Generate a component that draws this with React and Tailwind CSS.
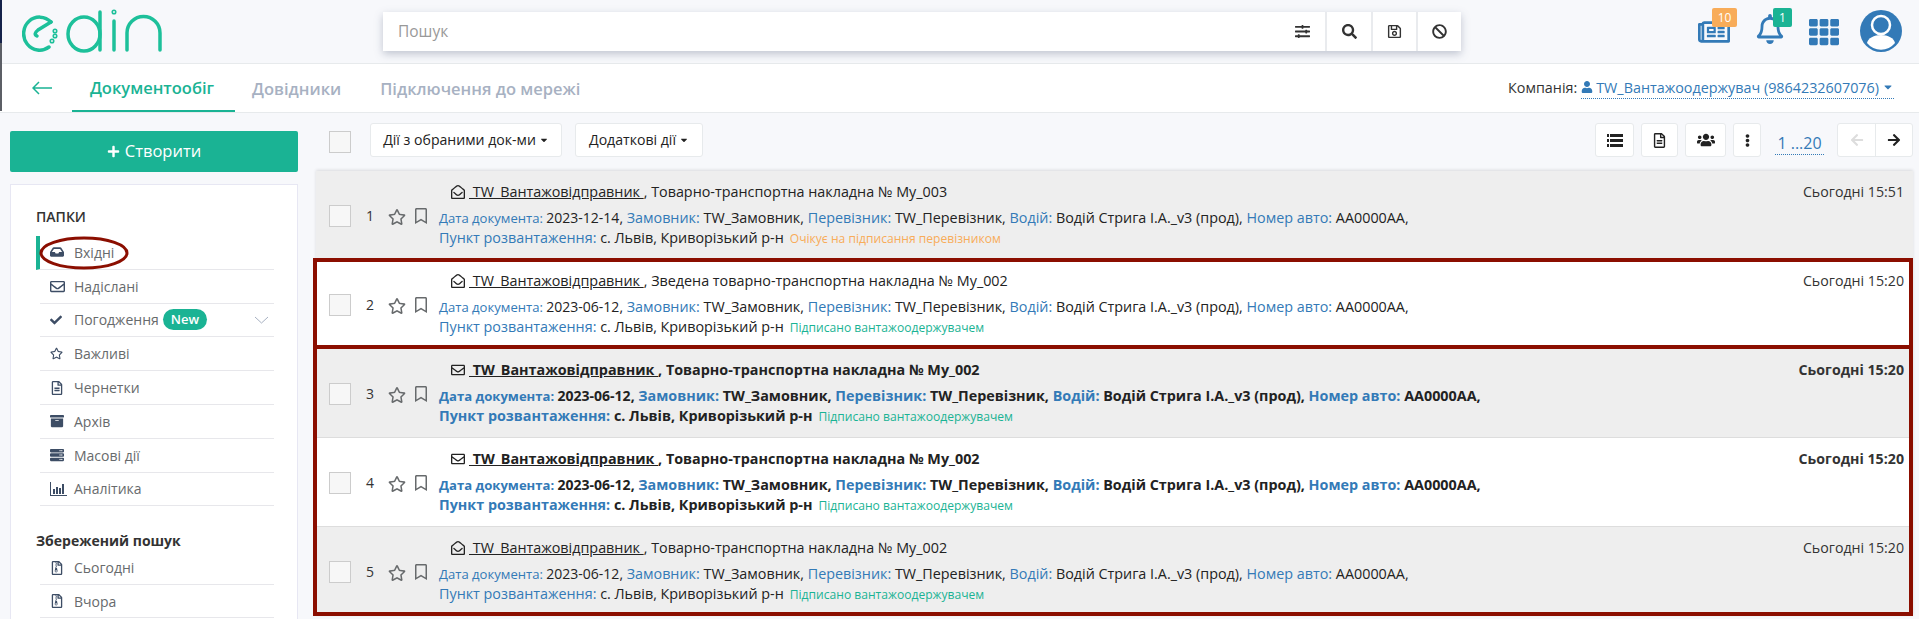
import {
  FaArchive, FaArrowLeft, FaArrowRight, FaBan, FaCaretDown, FaCheck, FaEllipsisV, FaInbox,
  FaPlus, FaRegBell, FaRegBookmark, FaRegEnvelope, FaRegEnvelopeOpen, FaRegFileAlt, FaRegFileArchive, FaRegNewspaper,
  FaRegSave, FaRegStar, FaSearch, FaServer, FaSlidersH, FaTh, FaUser, FaUsers,
} from "react-icons/fa";

const font = { fontFamily: '"Open Sans", "Noto Sans", sans-serif' };

const Logo = () => (
  <svg width="140" height="44" viewBox="0 0 140 44" fill="none" stroke="#1dc09a" strokeWidth="3.5" strokeLinecap="round">
    <path d="M29 13 A16 16.5 0 1 0 27 38" />
    <path d="M29 13 L16 21 Q11 25 15 27" />
    <circle cx="33" cy="22" r="0.8" />
    <circle cx="33" cy="27" r="0.8" />
    <circle cx="30" cy="32" r="0.8" />
    <ellipse cx="62" cy="25" rx="16" ry="17" />
    <path d="M78 3 V41" />
    <path d="M92 12 V41" />
    <circle cx="92" cy="3" r="0.8" />
    <path d="M105 41 V24 A16.5 16.5 0 0 1 138 24 V41" />
  </svg>
);

const Avatar = () => (
  <svg width="42" height="42" viewBox="0 0 42 42">
    <circle cx="21" cy="21" r="21" fill="#337ab7" />
    <path d="M7 33 c1 -5 7 -8 14 -8 s13 3 14 8 A18 18 0 0 1 7 33 z" fill="#fff" />
    <circle cx="21" cy="15" r="9" fill="#337ab7" stroke="#fff" strokeWidth="2.5" />
  </svg>
);

const BarsIcon = () => (
  <svg width="17" height="14" viewBox="0 0 17 14" fill="#3d4d65">
    <path d="M0 0h1v13h16v1H0z" />
    <rect x="3" y="7" width="2" height="5" />
    <rect x="6" y="5" width="2" height="7" />
    <rect x="9" y="6" width="2" height="6" />
    <rect x="12" y="2" width="2" height="10" />
  </svg>
);

const ListIcon = () => (
  <svg width="16" height="13" viewBox="0 0 16 13" fill="#222222">
    <rect x="0" y="0" width="2" height="3" />
    <rect x="3" y="0" width="13" height="3" />
    <rect x="0" y="5" width="2" height="3" />
    <rect x="3" y="5" width="13" height="3" />
    <rect x="0" y="10" width="2" height="3" />
    <rect x="3" y="10" width="13" height="3" />
  </svg>
);

const folders = [
  { name: "Вхідні", icon: <FaInbox size={14} /> },
  { name: "Надіслані", icon: <FaRegEnvelope size={15} /> },
  { name: "Погодження", icon: <FaCheck size={12} />, isNew: true },
  { name: "Важливі", icon: <FaRegStar size={13} /> },
  { name: "Чернетки", icon: <FaRegFileAlt size={14} /> },
  { name: "Архів", icon: <FaArchive size={14} /> },
  { name: "Масові дії", icon: <FaServer size={14} /> },
  { name: "Аналітика", icon: <BarsIcon /> },
];

const rows = [
  { n: 1, title: "Товарно-транспортна накладна № My_003", date: "2023-12-14", time: "15:51", status: "Очікує на підписання перевізником", orange: true, bg: "bg-[#eeeeee]" },
  { n: 2, title: "Зведена товарно-транспортна накладна № My_002", date: "2023-06-12", time: "15:20", status: "Підписано вантажоодержувачем", bg: "bg-white" },
  { n: 3, title: "Товарно-транспортна накладна № My_002", date: "2023-06-12", time: "15:20", status: "Підписано вантажоодержувачем", unread: true, bg: "bg-[#eeeeee]" },
  { n: 4, title: "Товарно-транспортна накладна № My_002", date: "2023-06-12", time: "15:20", status: "Підписано вантажоодержувачем", unread: true, bg: "bg-white" },
  { n: 5, title: "Товарно-транспортна накладна № My_002", date: "2023-06-12", time: "15:20", status: "Підписано вантажоодержувачем", bg: "bg-[#eeeeee]" },
];

const Label = ({ children, small }) => (
  <span className={small ? "text-[#337ab7] text-[13.1px]" : "text-[#337ab7]"}>{children}</span>
);

const Row = ({ row }) => (
  <div className={`flex h-[89px] border-b border-[#dddddd] ${row.bg} ${row.unread ? "font-bold" : ""}`}>
    <div className="flex items-start pt-[34px] pl-[13px] w-[123px] shrink-0">
      <div className="w-[22px] h-[22px] border border-[#cccccc] bg-[#f7f7f7] shrink-0" />
      <span className="ml-[15px] w-[9px] text-[14px] font-normal text-[#333333]">{row.n}</span>
      <FaRegStar size={18} className="ml-[13px] mt-[3px] text-[#676a6c] shrink-0" />
      <FaRegBookmark size={16} className="ml-[7px] mt-[3px] text-[#676a6c] shrink-0" />
    </div>
    <div className="flex-1 pt-[11px] text-[14.35px] text-[#222222] leading-[20px]">
      <div className="flex items-center ml-[12px] h-[20px]">
        {row.unread ? <FaRegEnvelope size={14} /> : <FaRegEnvelopeOpen size={14} />}
        <span className="underline ml-[4px]">&nbsp;TW_Вантажовідправник&nbsp;</span>
        <span>,&nbsp;{row.title}</span>
      </div>
      <div className="mt-[6px] h-[20px] whitespace-nowrap">
        <Label small>Дата документа: </Label><span className="text-[14px]">{row.date}, </span>
        <Label>Замовник: </Label>TW_Замовник, <Label>Перевізник: </Label>TW_Перевізник, <Label>Водій: </Label>Водій Стрига І.А._v3 (прод), <Label>Номер авто: </Label>АА0000АА,
      </div>
      <div className="h-[20px] whitespace-nowrap">
        <Label>Пункт розвантаження: </Label>с. Львів, Криворізький р-н
        <span className={`ml-[6px] text-[12.1px] font-normal ${row.orange ? "text-[#f8ac59]" : "text-[#1ab394]"}`}>{row.status}</span>
      </div>
    </div>
    <div className={`pt-[11px] pr-[9px] text-[14.2px] leading-[20px] text-[#333333] ${row.unread ? "font-bold" : ""}`}>Сьогодні {row.time}</div>
  </div>
);

const ToolBtn = ({ className, children }) => (
  <div className={`h-[34px] flex items-center justify-center bg-white border border-[#e7eaec] rounded-[3px] text-[#222222] ${className}`}>{children}</div>
);

export default function App() {
  return (
    <div style={font} className="relative h-[619px] overflow-hidden bg-[#f7f8fb] text-[#333333]">
      <div className="absolute left-0 top-0 w-[2px] h-[43px] bg-[#15224a]" />
      <div className="absolute left-0 top-[43px] w-[2px] h-[68px] bg-[#5c5f66]" />
      <header className="h-[64px] flex items-start border-b border-[#e7eaec] pl-[22px]">
        <div className="mt-[9px] w-[361px]"><Logo /></div>
        <div className="mt-[12px] w-[1078px] h-[39px] flex bg-white shadow-[0_3px_8px_rgba(90,100,130,0.35)]">
          <div className="flex-1 flex items-center pl-[15px] text-[15.5px] text-[#999999]">Пошук</div>
          <div className="w-[46px] flex items-center justify-center text-[#333333]"><FaSlidersH size={15} /></div>
          <div className="w-[46px] flex items-center justify-center border-l-2 border-[#e9ebee]"><FaSearch size={15} /></div>
          <div className="w-[45px] flex items-center justify-center border-l-2 border-[#e9ebee]"><FaRegSave size={15} /></div>
          <div className="w-[45px] flex items-center justify-center border-l-2 border-[#e9ebee]"><FaBan size={15} /></div>
        </div>
        <div className="ml-[237px] relative mt-[20px] text-[#337ab7]">
          <FaRegNewspaper size={32} className="-mt-[4px]" />
          <span className="absolute -top-[12px] left-[14px] w-[25px] h-[19px] rounded-[2px] bg-[#f8ac59] text-white text-[12px] leading-[19px] text-center">10</span>
        </div>
        <div className="ml-[25px] relative mt-[14px] text-[#337ab7]">
          <FaRegBell size={30} />
          <span className="absolute -top-[6px] left-[18px] w-[19px] h-[19px] rounded-[2px] bg-[#1ab394] text-white text-[12px] leading-[19px] text-center">1</span>
        </div>
        <div className="ml-[24px] mt-[17px] text-[#337ab7]"><FaTh size={30} /></div>
        <div className="ml-[21px] mt-[10px]"><Avatar /></div>
      </header>

      <nav className="h-[49px] flex items-stretch bg-white border-b border-[#e7eaec] text-[16.5px] font-semibold">
        <div className="w-[72px] flex items-center pl-[32px] text-[#1ab394]">
          <svg width="20" height="14" viewBox="0 0 20 14" fill="none" stroke="currentColor" strokeWidth="1.5">
            <path d="M20 7H1M7 1L1 7l6 6" />
          </svg>
        </div>
        <div className="w-[163px] flex items-center justify-center pt-[3px] pr-[3px] text-[#1ab394] border-b-2 border-[#1ab394]">Документообіг</div>
        <div className="ml-[17px] flex items-center pt-[3px] text-[#a7b1c2]">Довідники</div>
        <div className="ml-[39px] flex items-center pt-[3px] text-[#a7b1c2]">Підключення до мережі</div>
        <div className="ml-auto pr-[25px] flex items-center text-[14.35px] font-normal">
          <span className="mr-[4px]">Компанія:</span>
          <span className="flex items-center text-[#337ab7] border-b border-dotted border-[#337ab7]">
            <FaUser size={12} className="mr-[3px]" />TW_Вантажоодержувач (9864232607076)<FaCaretDown size={12} className="ml-[3px]" />
          </span>
        </div>
      </nav>

      <div className="flex">
        <aside className="w-[288px] ml-[10px] shrink-0">
          <div className="mt-[18px] h-[41px] flex items-center justify-center rounded-[2px] bg-[#1ab394] text-white text-[16.5px]">
            <FaPlus size={13} className="mr-[5px]" />Створити
          </div>
          <div className="relative mt-[12px] h-[500px] bg-white border border-[#e7e7f3] pl-[25px] pr-[23px]">
            <div className="mt-[22px] h-[20px] text-[14px] leading-[20px] font-semibold text-[#333333]">ПАПКИ</div>
            <ul className="mt-[9px] pl-[4px] text-[14px] text-[#676a6c]">
              {folders.map((f, i) => (
                <li key={f.name} className={`flex items-center h-[33.8px] border-b-[1.5px] border-[#e7e7eb] ${i === 0 ? "border-l-4 border-l-[#1ab394] -ml-[4px] pl-[10px]" : "pl-[10px]"}`}>
                  <span className="w-[24px] text-[#3d4d65] flex items-center shrink-0">{f.icon}</span>
                  <span>{f.name}</span>
                  {f.isNew && <span className="ml-[4px] px-[8px] h-[21px] leading-[20px] rounded-full bg-[#1ab394] text-white text-[13px] font-semibold">New</span>}
                  {f.isNew && (
                    <svg width="15" height="8" viewBox="0 0 15 8" fill="none" stroke="#a7b1c2" className="ml-auto mr-[5px]">
                      <path d="M1 1l6.5 6L14 1" />
                    </svg>
                  )}
                </li>
              ))}
            </ul>
            <div className="mt-[25px] h-[20px] text-[14px] leading-[20px] font-bold text-[#333333]">Збережений пошук</div>
            <ul className="pl-[4px] text-[14px] text-[#676a6c]">
              {["Сьогодні", "Вчора"].map((s) => (
                <li key={s} className="flex items-center h-[33.5px] border-b-[1.5px] border-[#e7e7eb] pl-[10px]">
                  <span className="w-[24px] text-[#3d4d65] flex items-center"><FaRegFileArchive size={14} /></span>
                  <span>{s}</span>
                </li>
              ))}
            </ul>
            <svg width="92" height="36" viewBox="0 0 92 36" fill="none" className="absolute left-[27px] top-[50px]">
              <ellipse cx="46" cy="18" rx="43" ry="15" stroke="#8b0e00" strokeWidth="3" />
            </svg>
          </div>
        </aside>

        <main className="ml-[18px] w-[1597px] relative">
          <div className="h-[58px] flex items-start pl-[13px] pt-[10px]">
            <div className="mt-[8px] w-[22px] h-[22px] border border-[#cccccc] bg-[#f7f7f7] shrink-0" />
            <ToolBtn className="ml-[19px] w-[192px] text-[14.1px]">Дії з обраними док-ми<FaCaretDown size={10} className="ml-[3px]" /></ToolBtn>
            <ToolBtn className="ml-[13px] w-[128px] text-[14.1px]">Додаткові дії<FaCaretDown size={10} className="ml-[3px]" /></ToolBtn>
            <ToolBtn className="ml-auto w-[39px]"><ListIcon /></ToolBtn>
            <ToolBtn className="ml-[7px] w-[37px]"><FaRegFileAlt size={15} /></ToolBtn>
            <ToolBtn className="ml-[7px] w-[41px]"><FaUsers size={18} /></ToolBtn>
            <ToolBtn className="ml-[7px] w-[28px]"><FaEllipsisV size={13} /></ToolBtn>
            <div className="ml-[14px] mt-[8px] h-[24px] w-[49px] text-center text-[16px] leading-[24px] text-[#337ab7] border-b border-dotted border-[#337ab7] whitespace-nowrap">1 ...20</div>
            <div className="ml-[13px] flex h-[34px] border border-[#e7eaec] rounded-[3px] bg-white">
              <div className="w-[37px] flex items-center justify-center text-[#dddddd]"><FaArrowLeft size={14} /></div>
              <div className="w-[37px] flex items-center justify-center border-l border-[#e7eaec] text-[#222222]"><FaArrowRight size={14} /></div>
            </div>
          </div>
          <div className="relative shadow-[0_-1px_3px_rgba(0,0,0,0.12)]">
            {rows.map((r) => <Row key={r.n} row={r} />)}
            <div className="absolute -left-[3px] right-0 top-[87px] h-[91px] border-4 border-[#8b0e00] pointer-events-none" />
            <div className="absolute -left-[3px] right-0 top-[174px] h-[271px] border-4 border-[#8b0e00] pointer-events-none" />
          </div>
        </main>
      </div>
    </div>
  );
}
